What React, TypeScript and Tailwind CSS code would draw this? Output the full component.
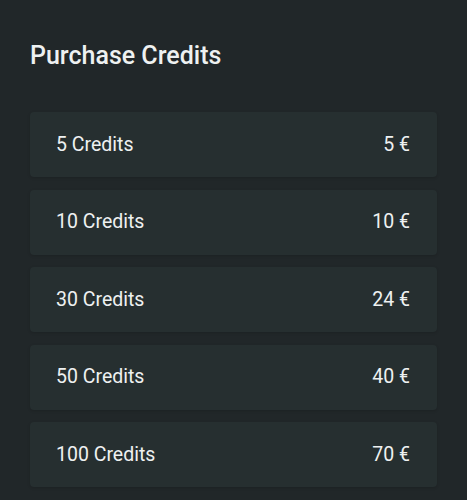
const packs = [
  { credits: 5, price: 5 },
  { credits: 10, price: 10 },
  { credits: 30, price: 24 },
  { credits: 50, price: 40 },
  { credits: 100, price: 70 },
];

export default function App() {
  return (
    <div className="min-h-screen bg-[#212729] px-[30px] pt-[39px] font-['Roboto',sans-serif] text-[#eef1f1]">
      <h1 className="text-[25px] font-medium leading-[33px]">Purchase Credits</h1>

      <div className="mt-[40px] flex flex-col gap-[12.5px]">
        {packs.map((pack) => (
          <div
            key={pack.credits}
            className="flex h-[65px] items-center justify-between rounded-[4px] bg-[#262f30] pl-[26px] pr-[27px] text-[19.5px] shadow-[0_1px_3px_rgba(0,0,0,0.15)]"
          >
            <span>{pack.credits} Credits</span>
            <span>{pack.price} €</span>
          </div>
        ))}
      </div>
    </div>
  );
}
